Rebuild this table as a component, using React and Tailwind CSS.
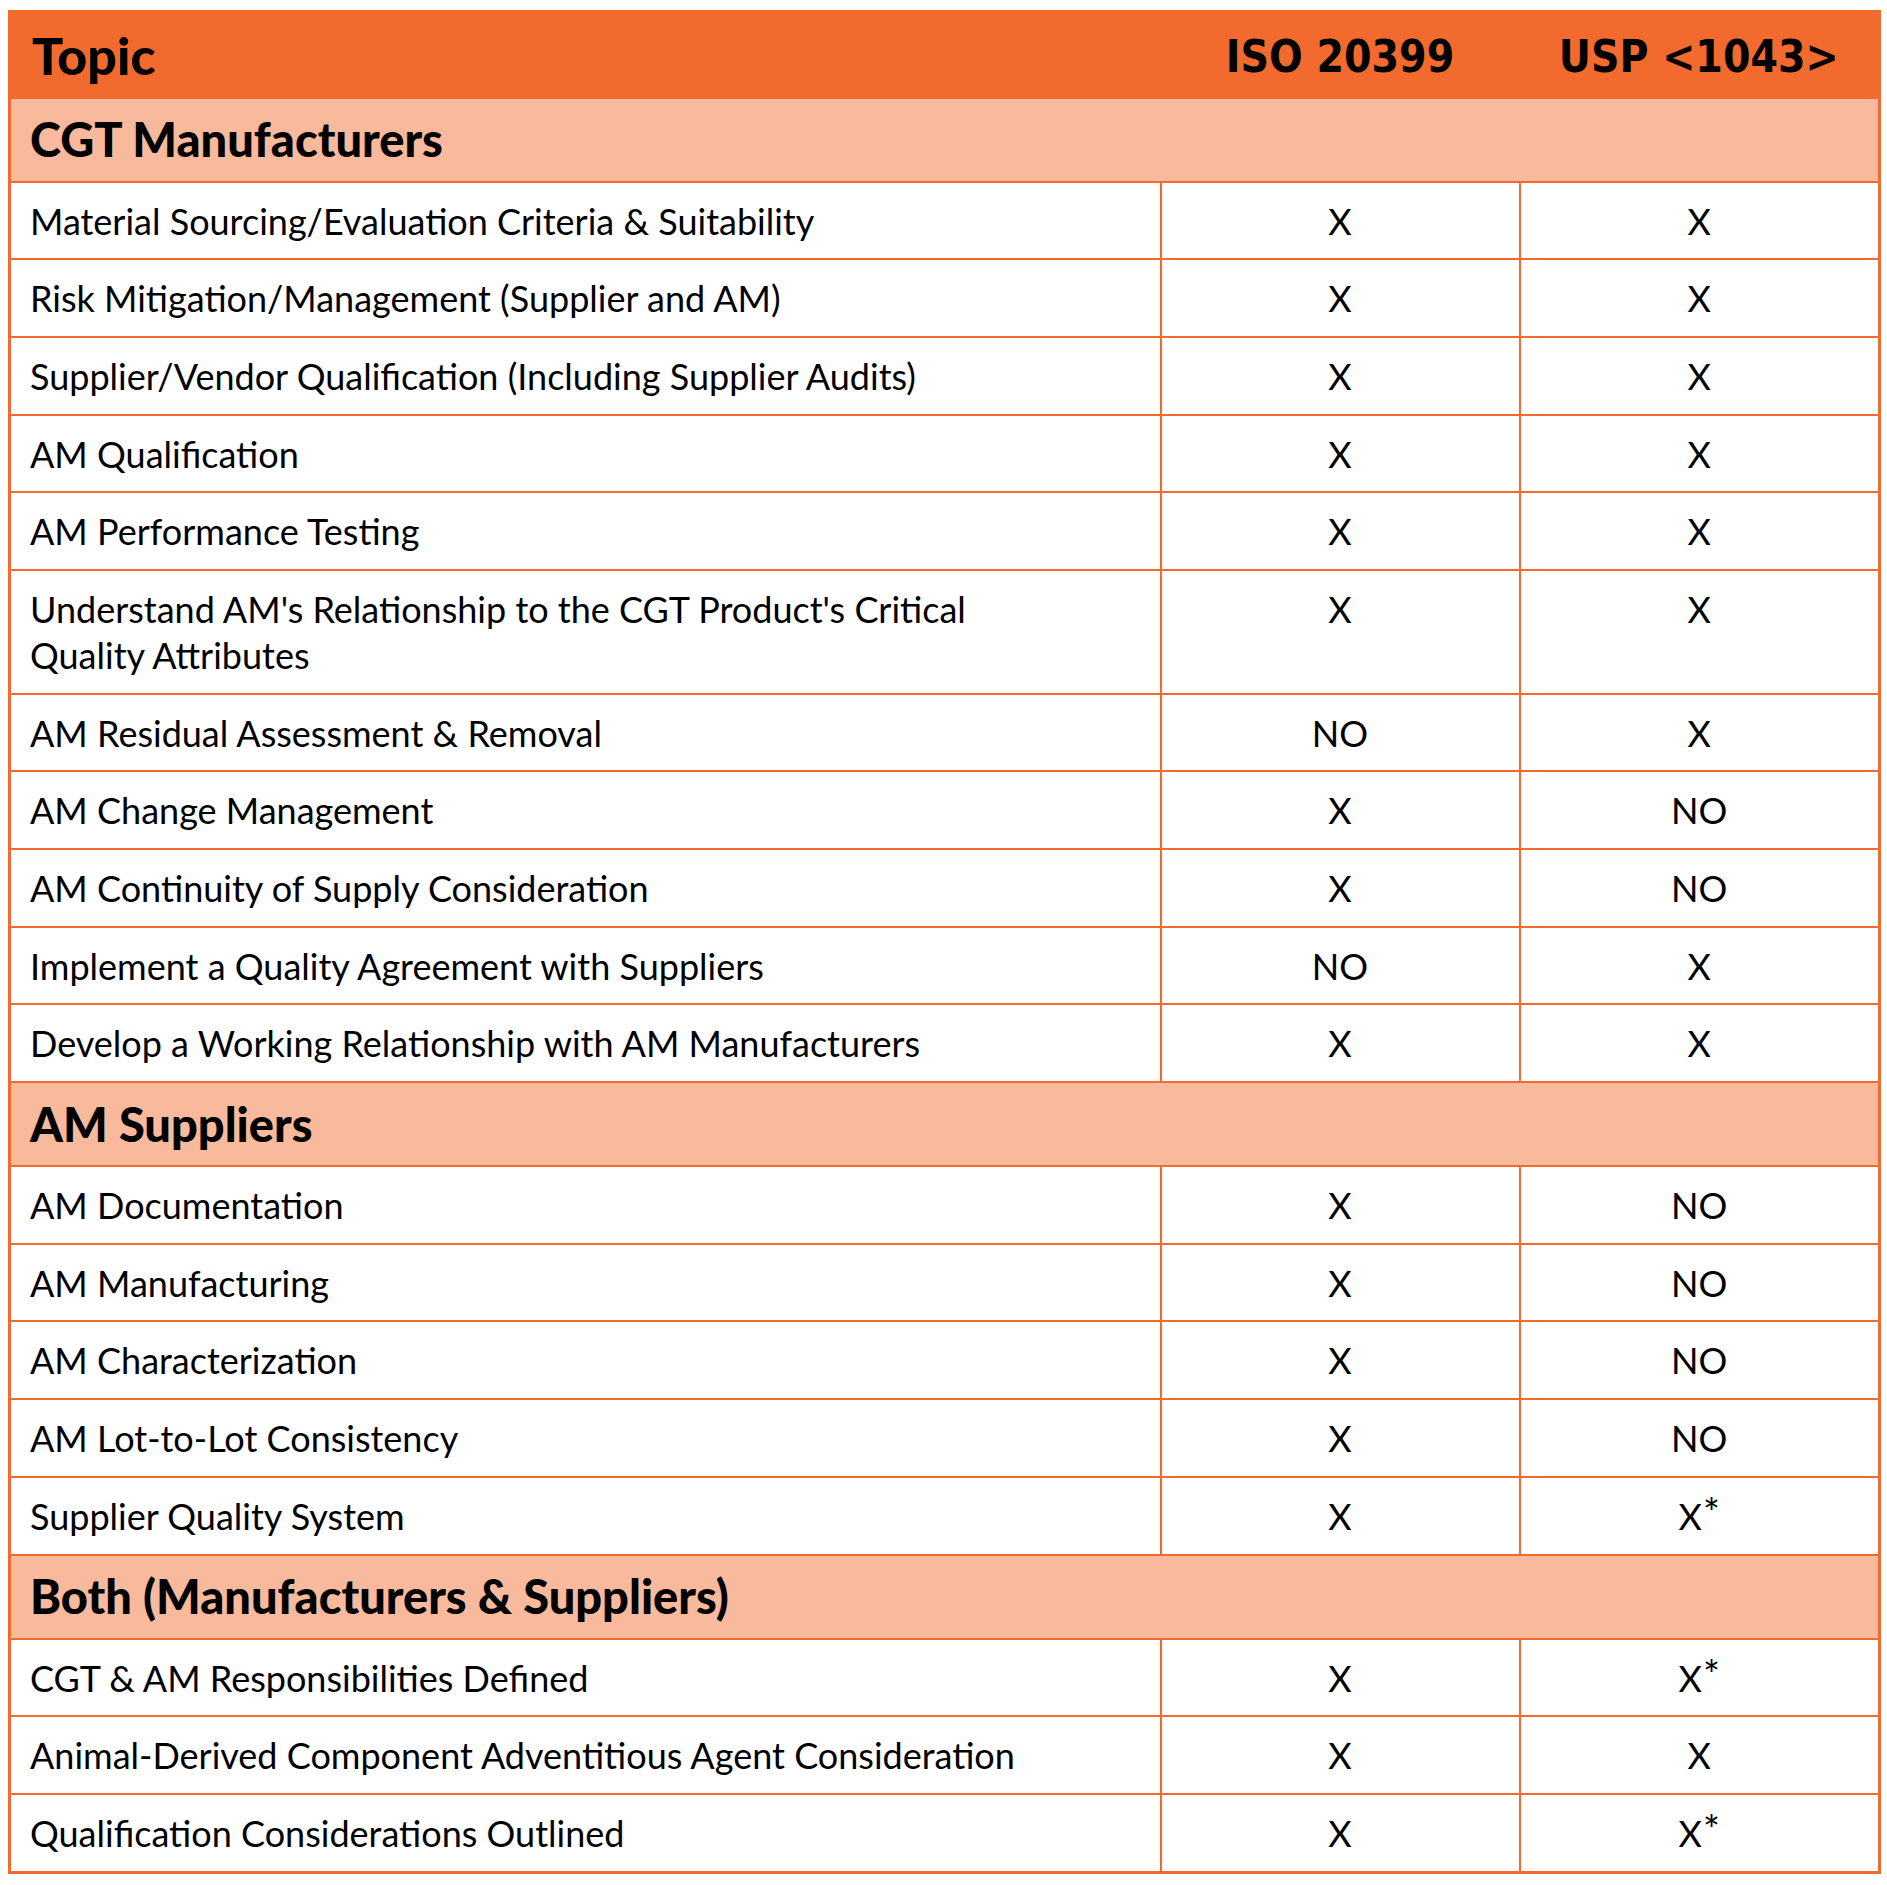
import React from 'react';

const sections = [
  {
    title: 'CGT Manufacturers',
    rows: [
      ['Material Sourcing/Evaluation Criteria & Suitability', 'X', 'X'],
      ['Risk Mitigation/Management (Supplier and AM)', 'X', 'X'],
      ['Supplier/Vendor Qualification (Including Supplier Audits)', 'X', 'X'],
      ['AM Qualification', 'X', 'X'],
      ['AM Performance Testing', 'X', 'X'],
      ["Understand AM's Relationship to the CGT Product's Critical|Quality Attributes", 'X', 'X'],
      ['AM Residual Assessment & Removal', 'NO', 'X'],
      ['AM Change Management', 'X', 'NO'],
      ['AM Continuity of Supply Consideration', 'X', 'NO'],
      ['Implement a Quality Agreement with Suppliers', 'NO', 'X'],
      ['Develop a Working Relationship with AM Manufacturers', 'X', 'X'],
    ],
  },
  {
    title: 'AM Suppliers',
    rows: [
      ['AM Documentation', 'X', 'NO'],
      ['AM Manufacturing', 'X', 'NO'],
      ['AM Characterization', 'X', 'NO'],
      ['AM Lot-to-Lot Consistency', 'X', 'NO'],
      ['Supplier Quality System', 'X', 'X*'],
    ],
  },
  {
    title: 'Both (Manufacturers & Suppliers)',
    rows: [
      ['CGT & AM Responsibilities Defined', 'X', 'X*'],
      ['Animal-Derived Component Adventitious Agent Consideration', 'X', 'X'],
      ['Qualification Considerations Outlined', 'X', 'X*'],
    ],
  },
];

const Mark = ({ value }) => {
  if (value === 'X*') {
    return (
      <span className="relative inline-block mr-[18px]">
        X
        <span className="absolute left-full top-[0px] pl-[1px] text-[40px] leading-none">*</span>
      </span>
    );
  }
  return <span>{value}</span>;
};

const Topic = ({ text }) => {
  const parts = text.split('|');
  return parts.map((p, i) => (
    <React.Fragment key={i}>
      {i > 0 && <br />}
      {p}
    </React.Fragment>
  ));
};

export default function App() {
  return (
    <div className="min-h-[1885px] bg-white pt-[10px] pl-[8px] font-['Lato',sans-serif] text-black">
      <table className="w-[1870px] table-fixed border-collapse border-[3px] border-[#f26a2d]">
        <colgroup>
          <col className="w-[1151px]" />
          <col className="w-[359px]" />
          <col className="w-[360px]" />
        </colgroup>
        <thead>
          <tr className="h-[86px] bg-[#f26a2d]">
            <th className="pl-[21px] text-left align-middle text-[52px] leading-none font-black">Topic</th>
            <th className="pt-[4px] text-center align-middle font-['DejaVu_Sans_Condensed',sans-serif] text-[44px] leading-none font-bold">
              ISO 20399
            </th>
            <th className="pt-[4px] text-center align-middle font-['DejaVu_Sans_Condensed',sans-serif] text-[44px] leading-none font-bold">
              USP &lt;1043&gt;
            </th>
          </tr>
        </thead>
        <tbody>
          {sections.map((section) => (
            <React.Fragment key={section.title}>
              <tr className="h-[84px] bg-[#f8b99c]">
                <td colSpan={3} className="border-y-2 border-[#f26a2d] pl-[19px] align-middle text-[47px] leading-none font-black">
                  {section.title}
                </td>
              </tr>
              {section.rows.map(([topic, iso, usp]) => (
                <tr key={topic}>
                  <td className="border-2 border-[#f26a2d] pl-[19px] pr-[10px] pt-[15px] pb-[14.7px] align-top text-[36px] leading-[46px]">
                    <Topic text={topic} />
                  </td>
                  <td className="border-2 border-[#f26a2d] pt-[15px] pb-[14.7px] text-center align-top text-[36px] leading-[46px]">
                    <Mark value={iso} />
                  </td>
                  <td className="border-2 border-[#f26a2d] pt-[15px] pb-[14.7px] text-center align-top text-[36px] leading-[46px]">
                    <Mark value={usp} />
                  </td>
                </tr>
              ))}
            </React.Fragment>
          ))}
        </tbody>
      </table>
    </div>
  );
}
